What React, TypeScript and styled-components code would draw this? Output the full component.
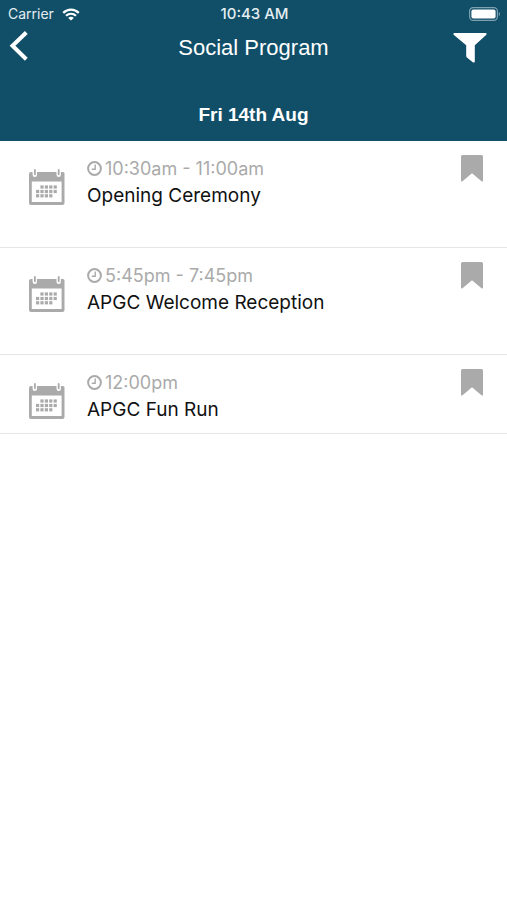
import React from 'react';
import styled, { createGlobalStyle } from 'styled-components';

const GlobalStyle = createGlobalStyle`
  *, *::before, *::after { box-sizing: border-box; }
  body { margin: 0; background: #fff; font-family: Inter, Roboto, sans-serif; }
  h1, h2, h3, p, ul { margin: 0; padding: 0; }
  svg { display: block; }
`;

const Screen = styled.div`
  min-height: 100vh;
  background: #fff;
`;

const Header = styled.header`
  background: #114f69;
  color: #fff;
`;

const StatusBar = styled.div`
  display: grid;
  grid-template-columns: 1fr auto 1fr;
  align-items: center;
  height: 28px;
  padding: 0 6px 0 8px;
  font-size: 14px;
  line-height: 18px;
  color: #e4edf1;
`;

const Carrier = styled.div`
  display: flex;
  align-items: center;
  gap: 8px;
`;

const Clock = styled.time`
  font-size: 15px;
  font-weight: 500;
`;

const Battery = styled.div`
  justify-self: end;
`;

const NavBar = styled.nav`
  display: grid;
  grid-template-columns: 1fr auto 1fr;
  align-items: center;
  height: 40px;
  padding: 0 9px;
`;

const IconButton = styled.button`
  padding: 0;
  border: 0;
  background: none;
  color: inherit;
  cursor: pointer;
`;

const BackButton = styled(IconButton)`
  justify-self: start;
  padding-bottom: 4px;
`;

const FilterButton = styled(IconButton)`
  justify-self: end;
  padding-right: 11px;
`;

const Title = styled.h1`
  font: 400 22px/26px 'Liberation Sans', Arial, sans-serif;
`;

const DateHeading = styled.h2`
  padding: 34px 0 14px;
  text-align: center;
  font: 700 19px/25px 'Liberation Sans', Arial, sans-serif;
`;

const EventList = styled.ul`
  list-style: none;
`;

const EventRow = styled.li<{ $compact?: boolean }>`
  display: grid;
  grid-template-columns: 36px 1fr auto;
  column-gap: 22px;
  align-items: start;
  min-height: ${({ $compact }) => ($compact ? 79 : 107)}px;
  padding: 14px 24px 10px 29px;
  border-bottom: 1px solid #e6e6e6;
`;

const CalendarBox = styled.div`
  padding-top: 13px;
`;

const Time = styled.p`
  display: flex;
  align-items: center;
  gap: 3px;
  font-size: 18px;
  line-height: 27px;
  color: #aaa;
`;

const EventName = styled.h3`
  font-size: 19px;
  font-weight: 400;
  line-height: 27px;
  color: #111;
`;

const WifiIcon = () => (
  <svg width="18" height="13" viewBox="0 0 18 13" fill="none" stroke="#fff" strokeWidth="2.2" aria-hidden="true">
    <path d="M1.2 4.9C5.6.5 12.4.5 16.8 4.9" />
    <path d="M4 7.8c2.9-2.7 7.1-2.7 10 0" />
    <path d="M9 12.6 6.2 9.9c1.6-1.4 4-1.4 5.6 0z" fill="#fff" stroke="none" />
  </svg>
);

const BatteryIcon = () => (
  <svg width="32" height="14" viewBox="0 0 32 14" role="img" aria-label="Battery full">
    <rect x=".6" y=".6" width="27.8" height="12.8" rx="3.6" fill="none" stroke="#7fa0b0" strokeWidth="1.2" />
    <rect x="2.4" y="2.4" width="24.2" height="9.2" rx="2" fill="#fff" />
    <path d="M29.8 4.8c1.6.7 1.6 3.7 0 4.4z" fill="#7fa0b0" />
  </svg>
);

const BackIcon = () => (
  <svg width="20" height="30" viewBox="0 0 20 30" fill="none" stroke="#fff" strokeWidth="4" aria-hidden="true">
    <path d="M17.300 1.500 3.500 14.800l13.800 13.400" />
  </svg>
);

const FilterIcon = () => (
  <svg width="34" height="30" viewBox="0 0 34 30" fill="#fff" aria-hidden="true">
    <path d="M1.500 0h31c1.200 0 1.500 1 .6 1.900L21.800 12.200v16c0 1.300-1 1.700-2 1l-5.600-4.500c-.7-.6-1-1-1-1.900V12.200L.9 1.900C0 1 .3 0 1.500 0z" />
  </svg>
);

const dots = [
  ...[12, 16.4, 20.8, 25.2].map((x) => [x, 17.4]),
  ...[7.6, 12, 16.4, 20.8, 25.2].map((x) => [x, 21.9]),
  ...[7.6, 12, 16.4, 20.8].map((x) => [x, 26.2]),
];

const CalendarIcon = () => (
  <svg width="36" height="38" viewBox="0 0 36 38" fill="#aaa" aria-hidden="true">
    <path fillRule="evenodd" d="M2 4h32q1.500 0 1.500 1.500V35q0 2-2 2H2Q0 37 0 35V6Q0 4 2 4zm.8 9.500V34h29.800V13.500z" />
    <rect x="3.600" y="0" width="4.400" height="9" rx="2.200" fill="#fff" />
    <rect x="27.500" y="0" width="4.400" height="9" rx="2.200" fill="#fff" />
    <rect x="5" y="1" width="1.800" height="6.200" rx=".9" />
    <rect x="28.800" y="1" width="1.800" height="6.200" rx=".9" />
    {dots.map(([x, y]) => (
      <rect key={`${x}-${y}`} x={x - 0.6} y={y} width="3.200" height="3.200" />
    ))}
  </svg>
);

const ClockIcon = () => (
  <svg width="15" height="15" viewBox="0 0 15 15" fill="none" stroke="#aaa" aria-hidden="true">
    <circle cx="7.500" cy="7.500" r="6.400" strokeWidth="2" />
    <path d="M8.200 3.500v4.800H4.700" strokeWidth="1.400" />
  </svg>
);

const BookmarkIcon = () => (
  <svg width="22" height="27" viewBox="0 0 22 27" fill="#aaa" aria-hidden="true">
    <path d="M1.500 0h19Q22 0 22 1.500v24q0 1.500-1.500.7L11 18.300 1.500 26.200Q0 27 0 25.500v-24Q0 0 1.500 0z" />
  </svg>
);

const events = [
  { time: '10:30am - 11:00am', name: 'Opening Ceremony' },
  { time: '5:45pm - 7:45pm', name: 'APGC Welcome Reception' },
  { time: '12:00pm', name: 'APGC Fun Run', compact: true },
];

export default function App() {
  return (
    <Screen>
      <GlobalStyle />
      <Header>
        <StatusBar>
          <Carrier>
            <span>Carrier</span>
            <WifiIcon />
          </Carrier>
          <Clock>10:43 AM</Clock>
          <Battery>
            <BatteryIcon />
          </Battery>
        </StatusBar>
        <NavBar>
          <BackButton type="button" aria-label="Back">
            <BackIcon />
          </BackButton>
          <Title>Social Program</Title>
          <FilterButton type="button" aria-label="Filter">
            <FilterIcon />
          </FilterButton>
        </NavBar>
        <DateHeading>Fri 14th Aug</DateHeading>
      </Header>
      <main>
        <EventList>
          {events.map(({ time, name, compact }) => (
            <EventRow key={name} $compact={compact}>
              <CalendarBox>
                <CalendarIcon />
              </CalendarBox>
              <div>
                <Time>
                  <ClockIcon />
                  <span>{time}</span>
                </Time>
                <EventName>{name}</EventName>
              </div>
              <IconButton type="button" aria-label={`Bookmark ${name}`}>
                <BookmarkIcon />
              </IconButton>
            </EventRow>
          ))}
        </EventList>
      </main>
    </Screen>
  );
}
